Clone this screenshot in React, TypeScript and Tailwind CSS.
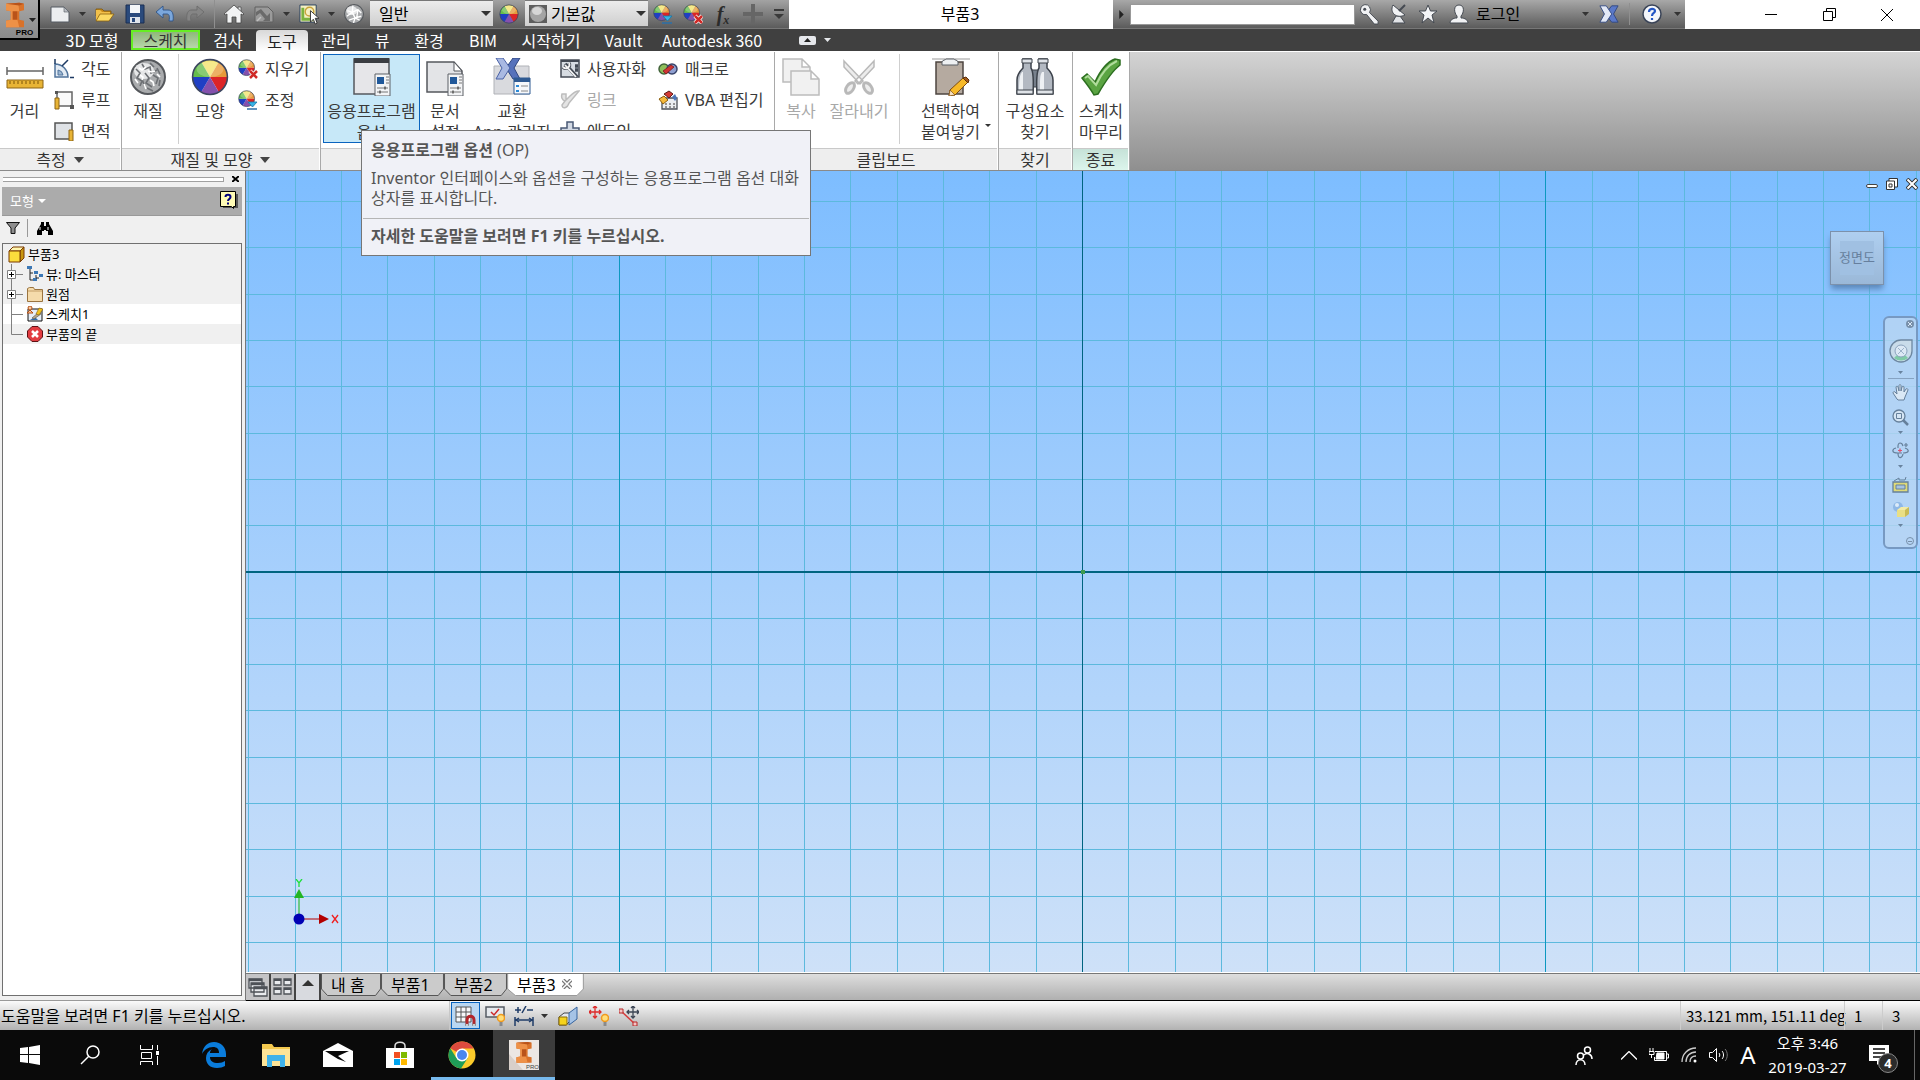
import type { ReactNode } from "react";
import clsx from "clsx";

const GRID_PITCH = 46.32;
const GRID_STEPS = Array.from({ length: 61 }, (_, i) => i - 30);

type IconProps = { className?: string };

/* ---------- shared icons ---------- */

function Caret({ className = "h-[5px] w-[9px] text-[#333]" }: IconProps) {
  return (
    <svg viewBox="0 0 10 5" preserveAspectRatio="none" className={clsx("shrink-0", className)}>
      <path d="M0 0h10L5 5z" fill="currentColor" />
    </svg>
  );
}

function WheelShape() {
  return (
    <>
      <path d="M12 12L6.500 2.500A11 11 0 0 1 17.500 2.500z" fill="#f2e36b" />
      <path d="M12 12L17.500 2.500A11 11 0 0 1 23 12z" fill="#e79a3a" />
      <path d="M12 12L23 12A11 11 0 0 1 17.500 21.500z" fill="#dc2427" />
      <path d="M12 12L17.500 21.500A11 11 0 0 1 6.500 21.500z" fill="#8450ad" />
      <path d="M12 12L6.500 21.500A11 11 0 0 1 1 12z" fill="#1f3fc4" />
      <path d="M12 12L1 12A11 11 0 0 1 6.500 2.500z" fill="#66bd4c" />
      <ellipse cx="12" cy="7" rx="8.500" ry="5" fill="#fff" opacity=".22" />
      <circle cx="12" cy="12" r="11" fill="none" stroke="#3c4660" strokeWidth="1" />
    </>
  );
}

function ColorWheel({ className = "size-5" }: IconProps) {
  return (
    <svg viewBox="0 0 24 24" className={className}>
      <WheelShape />
    </svg>
  );
}

function WheelClear({ className = "size-5" }: IconProps) {
  return (
    <svg viewBox="0 0 20 20" className={className}>
      <g transform="scale(.72)">
        <WheelShape />
      </g>
      <path d="M12 12l7 7M19 12l-7 7" stroke="#fff" strokeWidth="4" />
      <path d="M12 12l7 7M19 12l-7 7" stroke="#cf2a27" strokeWidth="2.500" />
    </svg>
  );
}

function WheelAdjust({ className = "size-5" }: IconProps) {
  return (
    <svg viewBox="0 0 20 20" className={className}>
      <g transform="scale(.72)">
        <WheelShape />
      </g>
      <path d="M10 12h9l-4.500 5z" fill="#36b3e6" stroke="#1576a8" strokeWidth=".8" />
      <path d="M9 19h10" stroke="#2b6fa8" strokeWidth="1.500" />
    </svg>
  );
}

function MarbleBall({ className = "size-5", net = false }: IconProps & { net?: boolean }) {
  return (
    <svg viewBox="0 0 36 36" className={className}>
      <circle cx="18" cy="18" r="17" fill="#a9abad" stroke="#55585c" strokeWidth="2" />
      <ellipse cx="14" cy="12" rx="10" ry="8" fill="#e6e7e8" />
      {net ? (
        <path
          d="M6 12l9 3 10-5 6 6M5 22l10-7 5 10 11-3M15 15l1-12M20 25l-3 9M25 10l-2 14M9 29l11-4 8 4"
          fill="none"
          stroke="#fff"
          strokeWidth="2.500"
        />
      ) : (
        <>
          <path
            d="M6 10l4 4-3 5 5 3-2 5M12 5l3 5 5-2 1 6 6-3M15 14l4 5-3 5 6 4M23 16l5 3-2 6M17 29l6 3M27 9l3 6M12 20l3 8M20 4l4 4M30 21l-1 6"
            fill="none"
            stroke="#6d7074"
            strokeWidth="1.600"
          />
          <path
            d="M9 9l3 2 4-3M10 16l3 2-1 3M18 12l4 1 3-1M20 21l3 2 1 4M14 25l2 5M27 15l3 3M5 20l3 4"
            fill="none"
            stroke="#fff"
            strokeWidth="1.600"
          />
        </>
      )}
    </svg>
  );
}

function InventorMark() {
  return (
    <>
      <path d="M3 1l14-1 5 1v7l-5 1v9l5 1v7H3v-7l5-1V9L3 8z" fill="#d9722a" />
      <path d="M3 1h13l1 8h-2v9l2 8H3v-7l5-1V9L3 8z" fill="#ee9147" />
      <path d="M10 9h5v9h-5zM3 1l14-1 5 1-5 2z" fill="#b9531a" />
    </>
  );
}

/* ---------- title bar ---------- */

const NewIcon = () => (
  <svg viewBox="0 0 20 18" className="h-[18px] w-5">
    <path d="M1 2h13l5 5v10H1z" fill="#eceef0" stroke="#555b63" />
    <path d="M14 2v5h5z" fill="#b9bdc2" stroke="#555b63" strokeWidth=".6" />
  </svg>
);

const OpenIcon = () => (
  <svg viewBox="0 0 20 16" className="h-4 w-5">
    <path d="M1 3h6l2 2h7v5H1z" fill="#c98c1c" stroke="#7a530b" strokeWidth=".8" />
    <path d="M1 14V4h4l2 2h8v3" fill="#f2c04a" />
    <path d="M1 15l4-7h14l-5 7z" fill="#fbd964" stroke="#8a5f0d" strokeWidth=".8" />
  </svg>
);

const SaveIcon = () => (
  <svg viewBox="0 0 20 20" className="size-5">
    <path d="M1 1h18v18H1z" fill="#2a4a7c" stroke="#1b2f52" />
    <path d="M5 1h10v8H5z" fill="#f4f6f8" />
    <path d="M5 13h10v6H5z" fill="#dfe4ea" />
    <path d="M7 14h3v4H7z" fill="#2a4a7c" />
  </svg>
);

const UndoIcon = ({ gray = false }: { gray?: boolean }) => (
  <svg viewBox="0 0 20 18" className={clsx("h-[18px] w-5", gray && "-scale-x-100")}>
    <path
      d="M1 7l7-6v4h5c4 0 6 3 5 11h-4c1-5 0-7-2-7H8v4z"
      fill={gray ? "#858585" : "#7ba7dc"}
      stroke={gray ? "#6c6c6c" : "#2f5486"}
      strokeWidth=".9"
    />
  </svg>
);

const HomeIcon = () => (
  <svg viewBox="0 0 20 20" className="size-5">
    <path d="M14 3h3v5h-3z" fill="#e7e9eb" stroke="#444" strokeWidth=".7" />
    <path d="M10 1L0 10l1 1 2-1v9h5v-6h4v6h5v-9l2 1 1-1z" fill="#f2f3f4" stroke="#444" strokeWidth=".8" />
  </svg>
);

const UpdateIcon = () => (
  <svg viewBox="0 0 20 18" className="h-[18px] w-5">
    <path d="M1 2h13l5 5v10H1z" fill="#9a9a9a" stroke="#606060" />
    <path d="M2 7l5-3 6 7 3-3v8H9l2-2-5-6-4 3z" fill="#6a6a6a" />
    <path d="M3 16l4-4" stroke="#c0c0c0" strokeWidth="1.500" />
  </svg>
);

const SelectIcon = () => (
  <svg viewBox="0 0 22 22" className="size-[21px]">
    <path d="M1 1h17v18H1z" fill="#f6f0c4" stroke="#27405f" />
    <path d="M4 4v12h11" fill="none" stroke="#7bb23f" strokeWidth="3" />
    <circle cx="11" cy="8" r="4.500" fill="none" stroke="#caa43c" strokeWidth="1.500" />
    <path d="M12 7v12l3-3 2 5 2-1-2-5h4z" fill="#fff" stroke="#333" />
  </svg>
);

const quickItems: { label: string; icon: ReactNode; menu?: boolean }[] = [
  { label: "새로 만들기", icon: <NewIcon />, menu: true },
  { label: "열기", icon: <OpenIcon /> },
  { label: "저장", icon: <SaveIcon /> },
  { label: "명령취소", icon: <UndoIcon /> },
  { label: "명령복구", icon: <UndoIcon gray /> },
];

const quickItems2: { label: string; icon: ReactNode; menu?: boolean }[] = [
  { label: "홈", icon: <HomeIcon /> },
  { label: "업데이트", icon: <UpdateIcon />, menu: true },
  { label: "선택", icon: <SelectIcon />, menu: true },
  { label: "재질", icon: <MarbleBall net /> },
];

function QuickButton({ label, icon, menu }: { label: string; icon: ReactNode; menu?: boolean }) {
  return (
    <>
      <button aria-label={label} className="flex w-[30px] items-center justify-center">
        {icon}
      </button>
      {menu && (
        <button aria-label={`${label} 메뉴`} className="flex w-[15px] items-center justify-center">
          <Caret className="h-1 w-[7px] text-[#333]" />
        </button>
      )}
    </>
  );
}

function Combo({ label, value, swatch }: { label: string; value: string; swatch?: boolean }) {
  return (
    <div className="mb-[2px] flex w-[123px] items-center border-t border-[#777] bg-linear-to-b from-[#ececec] to-[#cfcfcf]">
      {swatch && (
        <svg viewBox="0 0 18 18" className="ml-1 size-[18px]">
          <path d="M0 0h18v18H0z" fill="#5d5d5d" />
          <circle cx="9" cy="9" r="8" fill="#a4a4a4" />
          <ellipse cx="8" cy="6" rx="5" ry="4" fill="#d6d6d6" />
        </svg>
      )}
      <select
        aria-label={label}
        className={clsx("h-full flex-1 appearance-none bg-transparent text-base leading-5 text-black", swatch ? "pl-1" : "pl-[9px]")}
      >
        <option>{value}</option>
      </select>
      <Caret className="mr-[2px] h-[5px] w-[10px] text-[#333]" />
    </div>
  );
}

const KeyIcon = () => (
  <svg viewBox="0 0 22 22" className="size-[21px]">
    <path d="M2 4a5 5 0 0 1 9-1 5 5 0 0 1 0 6l9 9v3h-4l-8-10a5 5 0 0 1-6-7z" fill="#f1f2f4" stroke="#454a52" />
    <circle cx="6" cy="5.500" r="1.600" fill="#454a52" />
  </svg>
);

const DishIcon = () => (
  <svg viewBox="0 0 20 20" className="size-5">
    <path d="M7 12l-4 7h13l-5-7z" fill="#e2e4e7" stroke="#454a52" />
    <path d="M4 1c-4 8 4 14 12 10z" fill="#f1f2f4" stroke="#454a52" />
    <path d="M10 7l6-6" stroke="#454a52" strokeWidth="2" />
  </svg>
);

const StarIcon = () => (
  <svg viewBox="0 0 20 20" className="size-5">
    <path d="M10 1l2.500 6H19l-5 4 2 8-6-5-6 5 2-8-5-4h6.500z" fill="#f4f5f7" stroke="#454a52" />
  </svg>
);

const UserIcon = () => (
  <svg viewBox="0 0 20 20" className="size-5">
    <path d="M10 1c6 0 5 8 2 11v2c4 0 7 2 7 5H1c0-3 3-5 7-5v-2C5 9 4 1 10 1z" fill="#f1f2f4" stroke="#454a52" />
  </svg>
);

const ExchangeIcon = ({ className = "size-5" }: IconProps) => (
  <svg viewBox="0 0 22 20" className={className} strokeLinejoin="round">
    <path d="M21 1h-7l-7 9 7 9h7l-5-9z" fill="#5a78c8" stroke="#31477f" />
    <path d="M1 1h7l6 9-6 9H1l5-9z" fill="#e3e9f6" stroke="#31477f" />
  </svg>
);

function TitleBar() {
  return (
    <div className="flex h-[29px] bg-white">
      <div className="flex border-b border-[#777] bg-linear-to-b from-[#a3a3a3] to-[#5c5c5c] pl-[45px]">
        {quickItems.map((q) => (
          <QuickButton key={q.label} {...q} />
        ))}
        <span className="mx-1 w-px bg-[#8f8f8f]" />
        {quickItems2.map((q) => (
          <QuickButton key={q.label} {...q} />
        ))}
        <span className="w-px" />
        <Combo label="재질 종류" value="일반" />
        <button aria-label="모양" className="flex w-8 items-center justify-center">
          <ColorWheel />
        </button>
        <Combo label="모양 종류" value="기본값" swatch />
        <QuickButton label="조정" icon={<WheelAdjust />} />
        <QuickButton label="지우기" icon={<WheelClear />} />
        <button aria-label="매개변수" className="w-[30px] font-['Liberation_Serif',serif] text-xl leading-5 font-bold text-[#2b2b2b] italic">
          f<sub className="text-xs">x</sub>
        </button>
        <QuickButton
          label="추가"
          icon={
            <svg viewBox="0 0 20 20" className="size-5">
              <path d="M8 0h4v8h8v4h-8v8H8v-8H0V8h8z" fill="#666" />
            </svg>
          }
        />
        <button aria-label="사용자화 메뉴" className="flex w-[21px] flex-col items-center justify-center gap-[3px]">
          <span className="h-[2px] w-[10px] bg-[#3a3a3a]" />
          <Caret className="h-[5px] w-[10px] text-[#3a3a3a]" />
        </button>
      </div>

      <h1 className="flex-1 pl-[18px] text-center text-base leading-[29px] text-black">부품3</h1>

      <div className="flex w-[572px] items-center border-b border-[#777] bg-linear-to-b from-[#a8a8a8] to-[#5c5c5c]">
        <span className="flex w-[17px] justify-center">
          <svg viewBox="0 0 5 10" className="h-[9px] w-[5px]">
            <path d="M0 0v10l5-5z" fill="#222" />
          </svg>
        </span>
        <input aria-label="검색" className="h-[21px] w-[225px] border border-[#999] bg-white px-1 text-sm" />
        <button aria-label="키" className="flex w-[29px] justify-center"><KeyIcon /></button>
        <button aria-label="통신 센터" className="flex w-[29px] justify-center"><DishIcon /></button>
        <button aria-label="즐겨찾기" className="flex w-[30px] justify-center"><StarIcon /></button>
        <button className="flex w-[150px] items-center gap-[7px] pl-[6px] text-base leading-5 text-black">
          <UserIcon />
          <span className="flex-1 text-left">로그인</span>
          <Caret className="mr-1 h-1 w-[7px] text-[#333]" />
        </button>
        <button aria-label="Exchange" className="flex w-8 justify-center"><ExchangeIcon /></button>
        <span className="mx-1 h-[22px] w-px bg-[#8f8f8f]" />
        <button aria-label="도움말" className="flex w-9 justify-center">
          <svg viewBox="0 0 20 20" className="size-5">
            <circle cx="10" cy="10" r="9" fill="#f4f6fa" stroke="#3a4458" strokeWidth="1.500" />
            <path d="M7 8c0-4 6-4 6-1 0 2-3 2-3 5M10 14v2" fill="none" stroke="#2456c5" strokeWidth="2.200" />
          </svg>
        </button>
        <Caret className="ml-1 h-1 w-[7px] text-[#333]" />
      </div>

      <div className="flex w-[235px] pl-[57px]">
        <button aria-label="최소화" className="flex w-[58px] items-center justify-center">
          <span className="h-px w-3 bg-black" />
        </button>
        <button aria-label="복원" className="flex w-[58px] items-center justify-center">
          <svg viewBox="0 0 13 13" className="size-[13px]" fill="none" stroke="#000">
            <path d="M.5 3.500h9v9h-9zM3.500 3.500v-3h9v9h-3" />
          </svg>
        </button>
        <button aria-label="닫기" className="flex w-[58px] items-center justify-center">
          <svg viewBox="0 0 12 12" className="size-3" fill="none" stroke="#000">
            <path d="M0 0l12 12M12 0L0 12" />
          </svg>
        </button>
      </div>
    </div>
  );
}

/* ---------- ribbon tabs ---------- */

const ribbonTabs = [
  { label: "3D 모형", width: "w-[78px]" },
  { label: "스케치", width: "w-[69px]", sketch: true },
  { label: "검사", width: "w-[56px]" },
  { label: "도구", width: "w-[52px]", active: true },
  { label: "관리", width: "w-[56px]" },
  { label: "뷰", width: "w-[36px]" },
  { label: "환경", width: "w-[58px]" },
  { label: "BIM", width: "w-[50px]" },
  { label: "시작하기", width: "w-[86px]" },
  { label: "Vault", width: "w-[59px]" },
  { label: "Autodesk 360", width: "w-[118px]" },
];

function RibbonTabs() {
  return (
    <nav className="flex h-[22px] items-stretch bg-[#404040] pl-[53px] font-['Noto_Sans_CJK_KR',sans-serif] text-base leading-[22px] whitespace-nowrap text-white">
      {ribbonTabs.map((t) => (
        <button
          key={t.label}
          className={clsx(
            t.width,
            t.sketch && "my-px border-2 border-[#66ee22] bg-linear-to-b from-[#8fb87a] to-[#b8d6ab] leading-4 text-[#333]",
            t.active && "mt-px rounded-t-sm bg-linear-to-b from-[#d8d8d8] to-white text-[#222]"
          )}
        >
          {t.label}
        </button>
      ))}
      <button aria-label="리본 최소화" className="ml-7 flex items-center gap-2">
        <span className="flex h-[9px] w-[17px] items-center justify-center rounded-xs bg-[#e6e8ec]">
          <Caret className="h-1 w-[7px] rotate-180 text-[#222]" />
        </span>
        <Caret className="h-1 w-[7px] text-[#e6e8ec]" />
      </button>
    </nav>
  );
}

/* ---------- ribbon icons ---------- */

const DistanceIcon = () => (
  <svg viewBox="0 0 38 38" className="size-[38px]">
    <path d="M1 9v8M37 9v8M1 13h36" stroke="#666" strokeWidth="1.500" />
    <path d="M1 22h36v8H1z" fill="#e8b436" stroke="#8d6414" />
    <path d="M4 23v3M8 23v3M12 23v3M16 23v3M20 23v3M24 23v3M28 23v3M32 23v3" stroke="#7b5409" />
  </svg>
);

const AngleIcon = () => (
  <svg viewBox="0 0 20 20" className="size-5">
    <path d="M1 5a13 13 0 0 1 13 13H1z" fill="#e3ebf4" stroke="#51749c" strokeWidth="1.500" />
    <path d="M4 11a6 6 0 0 1 5 5H4z" fill="#9db7d2" stroke="#51749c" />
    <path d="M1 0v5M8 7l6-6M16 18.500h4" stroke="#1d3a63" strokeWidth="1.500" />
  </svg>
);

const LoopIcon = () => (
  <svg viewBox="0 0 20 20" className="size-5">
    <path d="M3 2h15v14H3z" fill="#fafafa" stroke="#666" strokeWidth="1.500" />
    <path d="M1 8h4v11H1z" fill="#e8b436" stroke="#8d6414" />
    <path d="M16 15h4v4h-4zM1 1h3v3H1z" fill="#555" />
  </svg>
);

const AreaIcon = () => (
  <svg viewBox="0 0 20 20" className="size-5">
    <path d="M1 2h17v16H1z" fill="#dfe2e6" stroke="#555" strokeWidth="1.500" />
    <path d="M15 9h4v11h-4z" fill="#e8b436" stroke="#8d6414" />
  </svg>
);

const PageBadge = () => (
  <>
    <path d="M22 16h15v22H22z" fill="#f3f4f6" stroke="#5d6167" />
    <path d="M24 19h7v7h-7z" fill="#20589a" />
    <path d="M33 19h3M33 22h3M33 25h3M24 30h11M24 34h11" stroke="#777" />
    <path d="M32 28.500v3M27 32.500v3" stroke="#555" strokeWidth="1.500" />
  </>
);

const AppOptionsIcon = () => (
  <svg viewBox="0 0 38 38" className="size-[38px]">
    <path d="M1 1h35v35H1z" fill="#e6e6e9" stroke="#55585e" strokeWidth="1.500" />
    <path d="M1 0h35v5H1z" fill="#3b3d42" />
    <PageBadge />
  </svg>
);

const DocOptionsIcon = () => (
  <svg viewBox="0 0 38 38" className="size-[38px]">
    <path d="M1 4h27l8 9v21H1z" fill="#e3e4e7" stroke="#55585e" strokeWidth="1.500" />
    <path d="M28 4v9h8z" fill="#fff" stroke="#55585e" />
    <PageBadge />
  </svg>
);

const ExchangeAppIcon = () => (
  <svg viewBox="0 0 38 38" className="size-[38px]">
    <path d="M1 8h35v28H1z" fill="#d9dade" stroke="#b0b2b7" />
    <path d="M27 0h-7l-7 10 7 11h7l-6-11z" fill="#5672bb" stroke="#31477f" />
    <path d="M3 0h7l7 10-7 11H3l6-11z" fill="#a9b9e2" stroke="#4a62a6" />
    <path d="M21 20h16v16H21z" fill="#f6f8fb" stroke="#2f5a92" />
    <path d="M21 20h16v4H21z" fill="#2f5a92" />
    <path d="M23 27h3v2h-3zM23 32h3v2h-3z" fill="#2a8ad8" />
    <path d="M28 28h7M28 33h7" stroke="#888" />
  </svg>
);

const CustomizeIcon = () => (
  <svg viewBox="0 0 20 20" className="size-5">
    <path d="M1 1h18v17H1z" fill="#d7dce2" stroke="#444a54" strokeWidth="1.500" />
    <path d="M1 1h18v2H1z" fill="#444a54" />
    <path d="M5 5l12 13M9 4c2 4-3 7-6 4M15 7h3M15 11h3" stroke="#444a54" strokeWidth="3.500" fill="none" />
    <path d="M5 6l11 12M9 4c2 4-3 7-6 4" stroke="#f5f5f5" strokeWidth="1.800" fill="none" />
  </svg>
);

const LinkIcon = () => (
  <svg viewBox="0 0 20 20" className="size-5">
    <path
      d="M2 4h4v6l4-4c2-2 6-5 9-5L9 13c-2 6-7 6-7 2l3-4c-3-1-4-4-3-7z"
      fill="#e4e4e4"
      stroke="#bdbdbd"
      strokeWidth="1.500"
    />
  </svg>
);

const AddinIcon = () => (
  <svg viewBox="0 0 20 20" className="size-5">
    <path d="M7 1h6v6h6v6h-6v6H7v-6H1V7h6z" fill="#d2d9e4" stroke="#4a5a75" strokeWidth="1.500" />
  </svg>
);

const MacroIcon = () => (
  <svg viewBox="0 0 20 14" className="h-[14px] w-5">
    <circle cx="6" cy="7" r="5" fill="#8ebd5a" stroke="#41633a" strokeWidth="1.500" />
    <circle cx="14" cy="7" r="5" fill="#8f9fd0" stroke="#38446b" strokeWidth="1.500" />
    <path d="M5 9l8-6 3 2-8 7z" fill="#cf3434" stroke="#7c1d1d" strokeWidth=".8" />
  </svg>
);

const VbaIcon = () => (
  <svg viewBox="0 0 20 20" className="size-5">
    <path d="M4 8h15v11H4z" fill="#eceef1" stroke="#4c5058" strokeWidth="1.300" />
    <path d="M7 14h2M11 14h2M15 14h2M7 17h2M11 17h2M15 17h2" stroke="#777" strokeWidth="1.500" />
    <path d="M6 4l5-3 4 3-4 4z" fill="#d33a34" stroke="#5c1a17" />
    <path d="M1 9l5-3 4 4-5 4z" fill="#f5b93a" stroke="#8a5d10" />
    <path d="M14 7l3-3 2 4-2 3z" fill="#4d75b8" />
  </svg>
);

const CopyIcon = () => (
  <svg viewBox="0 0 38 38" className="size-[38px]" fill="#f1f1f1" stroke="#bcbcbc" strokeWidth="1.500">
    <path d="M1 1h19l8 8v15H1zM20 1v8h8" />
    <path d="M9 13h20l8 8v16H9zM29 13v8h8" />
  </svg>
);

const CutIcon = () => (
  <svg viewBox="0 0 38 38" className="size-[38px]" fill="#ededed" stroke="#b9b9b9" strokeWidth="1.500">
    <path d="M4 3l19 20-3 3L4 9zM34 3L15 23l3 3L34 9z" />
    <ellipse cx="10" cy="30" rx="3.500" ry="6" transform="rotate(35 10 30)" strokeWidth="3" />
    <ellipse cx="28" cy="30" rx="3.500" ry="6" transform="rotate(-35 28 30)" strokeWidth="3" />
  </svg>
);

const PasteIcon = () => (
  <svg viewBox="0 0 38 38" className="size-[38px]">
    <path d="M0 1h38" stroke="#999" />
    <path d="M4 4h27v32H4z" fill="#b5aaa0" stroke="#4d4640" strokeWidth="1.500" />
    <path d="M10 4c0-2 4-2 4-3h8c0 1 4 1 4 3v3H10z" fill="#eef0f2" stroke="#5a5e64" />
    <path d="M18 32l13-12 5 4-13 13-6 1z" fill="#f7b928" stroke="#7e4d12" />
    <path d="M31 20l3-1 3 3-1 3z" fill="#a35b1e" stroke="#5c2f0a" />
    <path d="M18 32l-1 6 6-1z" fill="#f6e0c0" stroke="#7e4d12" strokeWidth=".7" />
  </svg>
);

const BinocularsIcon = () => (
  <svg viewBox="0 0 38 38" className="size-[38px]">
    <path d="M14 12h10v17H14z" fill="#78818d" stroke="#3c424b" />
    <path d="M7 1h8v9c2 3 3 8 2 26H1V22c0-5 3-9 6-12z" fill="#b3b9c2" stroke="#3c424b" strokeWidth="1.500" />
    <path d="M31 1h-8v9c-2 3-3 8-2 26h16V22c0-5-3-9-6-12z" fill="#b3b9c2" stroke="#3c424b" strokeWidth="1.500" />
    <path d="M6 14c-2 3-3 6-3 18h4V14zM26 14c-2 3-2 6-2 18h4V14z" fill="#eef1f4" />
    <path d="M6 1h10v4H6zM22 1h10v4H22zM1 32h16v4H1zM21 32h16v4H21z" fill="#dfe3e8" stroke="#3c424b" />
  </svg>
);

const CheckIcon = () => (
  <svg viewBox="0 0 40 38" className="h-[38px] w-10">
    <path d="M1 20l5-4 8 8C19 13 26 4 34 1l5 1v5C31 13 24 24 17 36l-4 1C9 30 5 25 1 20z" fill="#5aa442" stroke="#2c6e20" strokeWidth="1.500" />
    <path d="M4 20l3-2 8 9C20 16 27 7 36 3" fill="none" stroke="#b0dc9c" strokeWidth="2" />
  </svg>
);

/* ---------- ribbon ---------- */

type BigProps = { icon: ReactNode; label: string; sub?: string; className?: string; active?: boolean; disabled?: boolean };

function BigButton({ icon, label, sub, className, active, disabled }: BigProps) {
  return (
    <button
      disabled={disabled}
      className={clsx(
        "flex h-[89px] shrink-0 flex-col items-center border text-base leading-[21px] whitespace-nowrap",
        active ? "border-[#0a64bf] bg-[#c7e8f8]" : "border-transparent",
        disabled ? "text-[#a8a8a8]" : "text-[#3a3a3a]",
        className
      )}
    >
      <span className="mt-[3px] mb-[5px] flex h-[38px] items-center">{icon}</span>
      <span>{label}</span>
      {sub && <span>{sub}</span>}
    </button>
  );
}

function SmallButton({ icon, label, disabled }: { icon: ReactNode; label: string; disabled?: boolean }) {
  return (
    <button
      disabled={disabled}
      className={clsx(
        "flex h-[31px] items-center gap-[7px] pb-[2px] text-base leading-5 whitespace-nowrap",
        disabled ? "text-[#a8a8a8]" : "text-[#3a3a3a]"
      )}
    >
      <span className="flex w-5 justify-center">{icon}</span>
      {label}
    </button>
  );
}

type PanelProps = { title: string; menu?: boolean; className?: string; footer?: string; children: ReactNode };

function Panel({ title, menu, className, footer, children }: PanelProps) {
  return (
    <section className={clsx("flex shrink-0 flex-col border-r border-[#a9a9a9] bg-white", className)}>
      <div className="flex h-[96px] items-start pt-[2px]">{children}</div>
      <h2
        className={clsx(
          "mr-px flex flex-1 items-center justify-center gap-2 border-t border-[#c9c9c9] text-base leading-5 font-normal text-[#333]",
          footer ?? "bg-[#eeeeee]"
        )}
      >
        {title}
        {menu && <Caret className="h-[6px] w-[10px] text-[#444]" />}
      </h2>
    </section>
  );
}

function Ribbon() {
  return (
    <div className="flex h-[120px] border-t border-b border-t-white border-b-[#8a8a8a] bg-linear-to-b from-[#d4d4d4] to-[#8f8f8f]">
      <Panel title="측정" menu className="w-[122px]">
        <BigButton icon={<DistanceIcon />} label="거리" className="w-[49px]" />
        <div className="flex flex-col pl-[5px]">
          <SmallButton icon={<AngleIcon />} label="각도" />
          <SmallButton icon={<LoopIcon />} label="루프" />
          <SmallButton icon={<AreaIcon />} label="면적" />
        </div>
      </Panel>

      <Panel title="재질 및 모양" menu className="w-[199px]">
        <BigButton icon={<MarbleBall className="size-[36px]" />} label="재질" className="w-[52px]" />
        <span className="mx-1 h-[90px] w-px bg-[#cfcfcf]" />
        <BigButton icon={<ColorWheel className="size-[38px]" />} label="모양" className="w-[54px]" />
        <div className="flex flex-col pl-px">
          <SmallButton icon={<WheelClear />} label="지우기" />
          <SmallButton icon={<WheelAdjust />} label="조정" />
        </div>
      </Panel>

      <Panel title="옵션" menu className="w-[454px]">
        <BigButton icon={<AppOptionsIcon />} label="응용프로그램" sub="옵션" active className="ml-[2px] w-[97px]" />
        <BigButton icon={<DocOptionsIcon />} label="문서" sub="설정" className="w-[50px]" />
        <BigButton icon={<ExchangeAppIcon />} label="교환" sub="App 관리자" className="w-[84px]" />
        <div className="flex flex-col pl-[6px]">
          <SmallButton icon={<CustomizeIcon />} label="사용자화" />
          <SmallButton icon={<LinkIcon />} label="링크" disabled />
          <SmallButton icon={<AddinIcon />} label="애드인" />
        </div>
        <div className="flex flex-col pl-3">
          <SmallButton icon={<MacroIcon />} label="매크로" />
          <SmallButton icon={<VbaIcon />} label="VBA 편집기" />
        </div>
      </Panel>

      <Panel title="클립보드" className="w-[224px]">
        <BigButton icon={<CopyIcon />} label="복사" disabled className="w-[52px]" />
        <BigButton icon={<CutIcon />} label="잘라내기" disabled className="w-[64px]" />
        <span className="mr-3 ml-2 h-[90px] w-px bg-[#cfcfcf]" />
        <BigButton icon={<PasteIcon />} label="선택하여" sub="붙여넣기" className="w-[77px]" />
        <Caret className="-ml-1 mt-[70px] h-[3px] w-[6px] text-[#333]" />
      </Panel>

      <Panel title="찾기" className="w-[74px]">
        <BigButton icon={<BinocularsIcon />} label="구성요소" sub="찾기" className="w-[72px]" />
      </Panel>

      <Panel title="종료" className="w-[57px]" footer="bg-linear-to-b from-[#c6e2d8] to-[#dcf5ec]">
        <BigButton icon={<CheckIcon />} label="스케치" sub="마무리" className="w-[56px]" />
      </Panel>
    </div>
  );
}

function OptionsTooltip() {
  return (
    <div
      role="tooltip"
      className="absolute top-[130px] left-[361px] z-20 w-[450px] border border-[#767676] bg-[#f0f1f7] text-base leading-5 whitespace-nowrap text-[#555]"
    >
      <p className="px-[9px] pt-[9px]">
        <b>응용프로그램 옵션</b> (OP)
      </p>
      <p className="px-[9px] pt-2 pb-[10px]">
        Inventor 인터페이스와 옵션을 구성하는 응용프로그램 옵션 대화
        <br />
        상자를 표시합니다.
      </p>
      <p className="mx-px border-t border-[#b5b5b5] px-2 pt-[7px] pb-[9px] font-bold">자세한 도움말을 보려면 F1 키를 누르십시오.</p>
    </div>
  );
}

/* ---------- model browser ---------- */

const PartIcon = () => (
  <svg viewBox="0 0 17 17" className="size-[17px]" stroke="#7a3b00" strokeLinejoin="round">
    <path d="M1 5l4-4h11l-4 4z" fill="#fff6b0" />
    <path d="M12 5l4-4v11l-4 4z" fill="#c8960f" />
    <path d="M1 5h11v11H1z" fill="#fbdc3c" />
  </svg>
);

const ViewRepIcon = () => (
  <svg viewBox="0 0 16 16" className="size-4">
    <path d="M3 2v12h3M3 7h3" fill="none" stroke="#222" />
    <path d="M0 0h5v3H0zM7 5h4v3H7zM12 8h4v3h-4zM6 12h4v3H6z" fill="#3c78b5" />
    <path d="M9 9v3h3" fill="none" stroke="#222" />
  </svg>
);

const FolderIcon = () => (
  <svg viewBox="0 0 16 15" className="h-[15px] w-4">
    <path d="M.5 14.500v-13l2-1h4l1 2h8v12z" fill="#f5dbab" stroke="#9a7440" />
    <path d="M1 4h14" stroke="#c39d66" />
  </svg>
);

const SketchIcon = () => (
  <svg viewBox="0 0 16 16" className="size-4">
    <path d="M1 3h14v12H1z" fill="#e5edf7" stroke="#111" />
    <path d="M3 14h8l-3-3z" fill="#2f6cb0" />
    <path d="M5 12l7-6 2 2-7 5z" fill="#b9a58a" stroke="#554" strokeWidth=".6" />
    <path d="M9 8l3-6 4 1-4 6z" fill="#f2c21e" stroke="#80570a" strokeWidth=".6" />
    <circle cx="3" cy="2" r="2" fill="#f7c9a0" stroke="#b34d12" />
    <path d="M0 7l3-3 3 3z" fill="#f7c9a0" stroke="#b34d12" />
  </svg>
);

const EndIcon = () => (
  <svg viewBox="0 0 16 16" className="size-4">
    <path d="M5 .5h6L15.500 5v6L11 15.500H5L.5 11V5z" fill="#e23b40" stroke="#5d1214" />
    <path d="M5 5l6 6M11 5l-6 6" stroke="#fff" strokeWidth="2.500" />
  </svg>
);

const treeItems = [
  { label: "뷰: 마스터", icon: <ViewRepIcon />, expandable: true },
  { label: "원점", icon: <FolderIcon />, expandable: true },
  { label: "스케치1", icon: <SketchIcon />, white: true },
  { label: "부품의 끝", icon: <EndIcon />, last: true },
];

function TreeBranch({ expandable, last }: { expandable?: boolean; last?: boolean }) {
  return (
    <svg viewBox="0 0 20 20" className="h-5 w-5 shrink-0" fill="none" stroke="#808080">
      <path d={last ? "M8.500 0v10.500H20" : "M8.500 0v20M8.500 10.500H20"} />
      {expandable && (
        <>
          <path d="M4.500 6.500h8v8h-8z" fill="#fff" />
          <path d="M6 10.500h5M8.500 8v5" stroke="#000" />
        </>
      )}
    </svg>
  );
}

function ModelBrowser() {
  return (
    <aside className="flex w-[245px] shrink-0 flex-col border-b border-[#999] bg-[#f0f0f0] pr-[3px] pb-[4px] pl-[2px]">
      <div className="flex h-4 items-center gap-1 pl-px">
        <span className="h-[5px] flex-1 border-y border-r border-[#a0a0a0] bg-white" />
        <button aria-label="패널 닫기" className="flex w-[14px] justify-center">
          <svg viewBox="0 0 7 6" className="h-[6px] w-[7px]">
            <path d="M0 0l7 6M7 0L0 6" stroke="#000" strokeWidth="2" />
          </svg>
        </button>
      </div>
      <div className="flex h-[29px] items-center justify-between border-b border-[#999] bg-[#ababab] pr-1 pb-px pl-2">
        <button className="flex items-center gap-1 text-[13px] leading-5 text-white">
          모형
          <Caret className="h-1 w-2 text-white" />
        </button>
        <button aria-label="도움말">
          <svg viewBox="0 0 18 19" className="h-[19px] w-[18px]">
            <path d="M3 3h15v14H3z" fill="#555" />
            <path d="M.5 .5h15v15h-2v2l-2-2H.5z" fill="#fffbb5" stroke="#000" />
            <path d="M5.500 6c0-3 5-3 5 0 0 2-2.500 2-2.500 4M8 11.500v2" fill="none" stroke="#00007b" strokeWidth="2" />
          </svg>
        </button>
      </div>
      <div className="flex h-[27px] items-center pb-[3px] pl-1">
        <button aria-label="필터">
          <svg viewBox="0 0 14 12" className="h-3 w-[14px]">
            <path d="M.5 .5h13L9 6v5.500H5V6z" fill="#8d8d8d" stroke="#111" />
          </svg>
        </button>
        <span className="mx-[7px] h-[18px] w-px bg-[#999]" />
        <button aria-label="찾기">
          <svg viewBox="0 0 16 13" className="ml-[2px] h-[13px] w-4">
            <path d="M4 0h3v4h2V0h3v2l4 7v4h-5V9H9V8H7v1H5v4H0V9l4-7z" fill="#000" />
            <path d="M3 5v3M11 5v3" stroke="#fff" />
          </svg>
        </button>
      </div>
      <div className="flex-1 border border-[#707070] bg-white text-[13px] leading-5 text-black">
        <div className="flex h-5 items-center gap-[3px] bg-[#f0f0f0] pl-[5px]">
          <PartIcon />
          <span className="pb-px">부품3</span>
        </div>
        <ul>
          {treeItems.map((t) => (
            <li key={t.label} className={clsx("flex h-5 items-center", t.white ? "bg-white" : "bg-[#f0f0f0]")}>
              <TreeBranch expandable={t.expandable} last={t.last} />
              <span className="mr-[3px] ml-1">{t.icon}</span>
              <span className="pb-px">{t.label}</span>
            </li>
          ))}
        </ul>
      </div>
    </aside>
  );
}

/* ---------- sketch canvas ---------- */

function SketchGrid() {
  return (
    <svg className="block h-full w-full" shapeRendering="crispEdges">
      <svg x="50%" y="50%" overflow="visible">
        {GRID_STEPS.map((i) => (
          <g key={i} fill="#5cb9dd">
            <rect x="-2000" y={Math.floor(i * GRID_PITCH)} width="4000" height="1" />
            <rect x={Math.round(i * GRID_PITCH) - 1} y="-2000" width="1" height="4000" />
          </g>
        ))}
        {[-20, -10, 10, 20].map((i) => (
          <rect key={i} x={Math.round(i * GRID_PITCH) - 1} y="-2000" width="1" height="4000" fill="#0d98c0" />
        ))}
        <rect x="-2000" y="-1" width="4000" height="2" fill="#006480" />
        <rect x="-1" y="-2000" width="1" height="4000" fill="#006480" />
        <rect x="-2" y="-2" width="4" height="4" fill="#3f9a4f" />
      </svg>
    </svg>
  );
}

function AxisTriad() {
  return (
    <svg viewBox="0 0 56 52" className="absolute bottom-[41px] left-[44px] h-[52px] w-14">
      <path d="M9 40V16" stroke="#12b312" />
      <path d="M9 10l5 9H4z" fill="#23b523" />
      <path d="M9 40h22" stroke="#b30000" />
      <path d="M29 35l10 5-10 5z" fill="#b30000" />
      <circle cx="9" cy="40" r="5.500" fill="#0000b4" />
      <path d="M6 0l3 4 3-4M9 4v4" fill="none" stroke="#1fe03a" strokeWidth="1.300" />
      <path d="M42 36l6 8M48 36l-6 8" stroke="#f02020" strokeWidth="1.300" />
    </svg>
  );
}

const NavCaret = () => <Caret className="h-[3px] w-[5px] text-[#68839f]" />;

function NavigationBar() {
  return (
    <div className="absolute top-[145px] right-[2px] flex h-[233px] w-[35px] flex-col items-center rounded-md border-2 border-[#7799c2] bg-[#b9d6f3]/80">
      <button aria-label="탐색 막대 닫기" className="mt-[2px] mr-[2px] flex size-2 items-center justify-center self-end rounded-full bg-[#7890aa]">
        <svg viewBox="0 0 6 6" className="size-1">
          <path d="M0 0l6 6M6 0L0 6" stroke="#dbe9f8" strokeWidth="1.500" />
        </svg>
      </button>
      <button aria-label="전체 탐색 휠" className="mt-[11px]">
        <svg viewBox="0 0 24 24" className="size-6">
          <path d="M12 1h11v11A11 11 0 1 1 12 1z" fill="#c9dcea" stroke="#6d87a0" strokeWidth="1.300" />
          <path d="M5 19a11 11 0 0 0 14 0l-3-3H8z" fill="#7fcba6" />
          <circle cx="12" cy="12" r="6" fill="#dce9f5" stroke="#8ba3bd" />
          <path d="M9 9l6 6M15 9l-6 6" stroke="#8ba3bd" strokeWidth=".8" />
        </svg>
      </button>
      <span className="mt-2"><NavCaret /></span>
      <span className="mt-1 h-px w-[26px] bg-[#86a3c2]" />
      <button aria-label="초점이동" className="mt-[5px]">
        <svg viewBox="0 0 17 17" className="size-[17px]">
          <path
            d="M5 15L1 9c0-1 1-2 2-1l2 2-1-7c0-1 2-1 2 0l1 4V2c0-2 2-2 2 0v5l1-4c0-1 2-1 2 0v5l2-3c1-1 2 0 2 1l-3 7-1 3H6z"
            fill="#dae8f5"
            stroke="#66809b"
          />
        </svg>
      </button>
      <button aria-label="줌" className="mt-2">
        <svg viewBox="0 0 17 17" className="size-[17px]">
          <circle cx="7" cy="7" r="6" fill="#d5e5f4" stroke="#66809b" strokeWidth="1.300" />
          <path d="M4.500 4.500h5v5h-5z" fill="none" stroke="#66809b" />
          <path d="M11 11l5 5" stroke="#66809b" strokeWidth="2.500" />
        </svg>
      </button>
      <span className="mt-[5px]"><NavCaret /></span>
      <button aria-label="회전" className="mt-2">
        <svg viewBox="0 0 17 17" className="size-[17px]" fill="none" stroke="#66809b" strokeWidth="1.200">
          <path d="M6 6V4c0-4 4-4 5 0M6 11c0 6 4 6 5 1M4 6c-4 1-5 5 2 5h4M13 6c5 2 4 5-2 5" />
          <path d="M6 8.500h4M8 6.500v4" stroke="#e0506a" />
          <path d="M12 3h4M14 1v4" />
        </svg>
      </button>
      <span className="mt-[6px]"><NavCaret /></span>
      <button aria-label="면 보기" className="mt-2">
        <svg viewBox="0 0 17 17" className="size-[17px]">
          <path d="M1 6h15v10H1z" fill="#dfd978" stroke="#66809b" strokeWidth="1.300" />
          <path d="M4 9h9v4H4z" fill="#a8c4e0" stroke="#66809b" />
          <path d="M2 5l5-3v2h6l1-3" fill="none" stroke="#66809b" />
        </svg>
      </button>
      <button aria-label="비주얼 스타일" className="mt-2">
        <svg viewBox="0 0 17 17" className="size-[17px]">
          <circle cx="6" cy="6" r="5" fill="#8fb8e6" />
          <circle cx="5" cy="4" r="2" fill="#dcebfa" />
          <path d="M5 9l4-3h8l-4 3z" fill="#f3eba6" />
          <path d="M5 9h8v7H5z" fill="#e9df85" />
          <path d="M13 9l4-3v7l-4 3z" fill="#c9bb55" />
        </svg>
      </button>
      <span className="mt-[6px]"><NavCaret /></span>
      <button aria-label="탐색 막대 옵션" className="mt-auto mr-[2px] mb-[2px] flex size-2 items-center justify-center self-end rounded-full border border-[#7890aa]">
        <span className="h-px w-1 bg-[#7890aa]" />
      </button>
    </div>
  );
}

function SketchCanvas() {
  return (
    <main className="relative min-h-0 flex-1 overflow-hidden bg-linear-to-b from-[#7dbdff] to-[#cee1f8]">
      <SketchGrid />
      <div className="absolute top-[7px] right-[2px] flex items-center gap-2">
        <button aria-label="문서 최소화" className="mt-1 h-1 w-3 rounded-xs border border-[#444] bg-white" />
        <button aria-label="문서 복원">
          <svg viewBox="0 0 12 12" className="size-3" fill="#fff" stroke="#333">
            <path d="M3 .5h8.500V9H3z" />
            <path d="M.5 3h8v8.500h-8z" />
            <path d="M3 6h3v3H3z" />
          </svg>
        </button>
        <button aria-label="문서 닫기">
          <svg viewBox="0 0 12 12" className="size-3">
            <path d="M1 1l10 10M11 1L1 11" stroke="#333" strokeWidth="4" />
            <path d="M1.500 1.500l9 9M10.500 1.500l-9 9" stroke="#fff" strokeWidth="2" />
          </svg>
        </button>
      </div>
      <button className="absolute top-[60px] right-9 flex size-[54px] items-center justify-center border border-[#7c91ab] bg-linear-to-b from-[#afcff0] to-[#9ab8d8] text-[13px] text-[#667f9d] shadow-[0_5px_6px_-1px_#5b86b8]">
        <span className="flex size-[34px] items-center justify-center bg-[#a0c0e2] whitespace-nowrap">정면도</span>
      </button>
      <NavigationBar />
      <AxisTriad />
    </main>
  );
}

/* ---------- document tabs and status bar ---------- */

const docTabs = [
  { label: "내 홈", width: "w-[60px]" },
  { label: "부품1", width: "w-[63px]" },
  { label: "부품2", width: "w-[63px]" },
  { label: "부품3", width: "w-[77px]", active: true },
];

function DocumentTabs() {
  return (
    <div className="flex h-7 shrink-0 border-t border-b border-t-[#777] border-b-black bg-linear-to-b from-[#dedede] to-[#b0b0b0]">
      {[
        <svg key="c" viewBox="0 0 20 19" className="h-[19px] w-5" fill="#e9ebee" stroke="#4d5157" strokeWidth="1.300">
          <path d="M1 1h13v9H1zM3 5h13v9H3zM6 9h13v9H6z" />
          <path d="M1 2h13M3 6h13M6 10h13" strokeWidth="2.500" />
        </svg>,
        <svg key="t" viewBox="0 0 20 18" className="h-[18px] w-5" fill="#e9ebee" stroke="#4d5157" strokeWidth="1.300">
          <path d="M1 1h7v6H1zM11 1h7v6h-7zM1 10h7v6H1zM11 10h7v6h-7z" />
          <path d="M1 2h7M11 2h7M1 11h7M11 11h7" strokeWidth="2" />
        </svg>,
        <Caret key="u" className="mb-2 h-[6px] w-3 rotate-180 text-[#333]" />,
      ].map((icon, i) => (
        <button
          key={i}
          aria-label={["계단식", "바둑판식", "문서 목록"][i]}
          className={clsx("flex w-[25px] items-center justify-center border-r-2 border-[#444]", i === 2 ? "bg-[#d8dadf]" : "bg-[#c4c4c6]")}
        >
          {icon}
        </button>
      ))}
      {docTabs.map((t) => (
        <button key={t.label} className={clsx("relative h-[23px] text-left text-base leading-[21px] text-black", t.width)}>
          <svg viewBox="0 0 60 23" preserveAspectRatio="none" className="absolute inset-0 h-full w-full">
            <path
              d="M.5 0v15l6 6.500h48l5-6.500V0"
              fill={t.active ? "#fff" : "#cbcbcb"}
              stroke={t.active ? "#999" : "#555"}
              vectorEffect="non-scaling-stroke"
            />
          </svg>
          <span className="relative flex items-center gap-[6px] pl-[10px]">
            {t.label}
            {t.active && (
              <svg viewBox="0 0 10 10" className="mb-1 size-[10px]">
                <path d="M1 1l8 8M9 1L1 9" stroke="#777" strokeWidth="4" />
                <path d="M1 1l8 8M9 1L1 9" stroke="#fff" strokeWidth="1.500" />
              </svg>
            )}
          </span>
        </button>
      ))}
    </div>
  );
}

const Bulb = () => (
  <>
    <circle cx="16" cy="12" r="3.500" fill="#ffdf7a" stroke="#f09a1f" strokeWidth="1.500" />
    <path d="M14.500 16h3v4h-3z" fill="#8a8a8a" />
  </>
);

function StatusTools() {
  return (
    <div className="flex h-full items-center border-l border-[#c8c8c8] pl-px">
      <button aria-label="그리드에 스냅" className="mr-[3px] flex h-[27px] w-[29px] items-center justify-center border border-[#0a64bf] bg-[#b9d7f2]">
        <svg viewBox="0 0 21 20" className="h-5 w-[21px]">
          <path d="M1 1h15v15H1zM6 1v15M11 1v15M1 6h15M1 11h15" fill="#f7f8fa" stroke="#555" />
          <path d="M12 19v-5c0-5 7-5 7 0v5" fill="none" stroke="#b3262b" strokeWidth="3" />
          <path d="M10.500 18h3v2h-3zM17.500 18h3v2h-3z" fill="#eee" stroke="#666" strokeWidth=".5" />
        </svg>
      </button>
      <button aria-label="구속조건 표시" className="flex w-[31px] justify-start pl-[2px]">
        <svg viewBox="0 0 20 20" className="size-5">
          <path d="M1 1h18v10H1z" fill="#e6e9ed" stroke="#555b63" strokeWidth="1.500" />
          <path d="M6 6l3 3 5-6" fill="none" stroke="#cc2a2a" strokeWidth="1.500" />
          <Bulb />
        </svg>
      </button>
      <button aria-label="치수 표시" className="flex items-center gap-[7px]">
        <svg viewBox="0 0 20 20" className="size-5" stroke="#1f3c68" strokeWidth="1.500" fill="none">
          <path d="M1 4h6M4 1v6M8 7l4-7M13 4h6M1 11v9M19 11v9M1 14h18" />
          <path d="M5 12l-3 2 3 2M15 12l3 2-3 2" />
        </svg>
        <Caret className="h-1 w-[7px] text-[#333]" />
      </button>
      <button aria-label="그래픽 슬라이스" className="ml-[10px]">
        <svg viewBox="0 0 20 20" className="size-5">
          <path d="M1 11l5-4h6v8l-4 4H1z" fill="#e4e8ee" stroke="#444" />
          <path d="M1 11h8v8H1z" fill="#f5d31d" stroke="#8a6d08" />
          <path d="M11 7l8-6v12l-8 6z" fill="#a5c3e6" stroke="#35639e" />
        </svg>
      </button>
      <button aria-label="모든 자유도 표시" className="ml-[11px]">
        <svg viewBox="0 0 20 20" className="size-5">
          <path d="M6 0v12M0 6h12M4 2l2-2 2 2M4 10l2 2 2-2M2 4L0 6l2 2M10 4l2 2-2 2" fill="none" stroke="#dd2a2a" strokeWidth="1.300" />
          <Bulb />
        </svg>
      </button>
      <button aria-label="완화 모드" className="ml-[10px]">
        <svg viewBox="0 0 20 20" className="size-5">
          <path d="M2 5l14 13" stroke="#d43a3a" strokeWidth="1.500" />
          <path d="M0 3h4v4H0zM14 16h4v4h-4z" fill="#f4c5c5" stroke="#b82727" />
          <path d="M14 0v12M8 6h12M12 2l2-2 2 2M12 10l2 2 2-2M10 4L8 6l2 2M18 4l2 2-2 2" fill="none" stroke="#3c4554" strokeWidth="1.300" />
        </svg>
      </button>
    </div>
  );
}

function StatusBar() {
  return (
    <div className="flex h-[29px] items-center bg-linear-to-b from-[#fafafa] to-[#b2b2b2] text-base leading-5 whitespace-nowrap text-black">
      <p className="w-[449px] pl-px">도움말을 보려면 F1 키를 누르십시오.</p>
      <StatusTools />
      <div className="ml-auto flex h-full font-['Noto_Sans_CJK_KR',sans-serif] text-[15px]">
        <span className="flex w-[164px] items-center border-l border-[#ccc] pl-[5px]">33.121 mm, 151.11 deg</span>
        <span className="flex w-[38px] items-center border-l border-[#ccc] pl-[9px]">1</span>
        <span className="flex w-[38px] items-center border-l border-[#ccc] pl-[9px]">3</span>
      </div>
    </div>
  );
}

/* ---------- windows taskbar ---------- */

const taskApps: { label: string; icon: ReactNode; state?: "open" | "active" }[] = [
  {
    label: "Edge",
    icon: (
      <svg viewBox="0 0 26 26" className="size-[26px]">
        <path
          d="M1 12C2 4 7 0 13 0c7 0 12 5 12 12v3H9c0 4 3 6 8 6 3 0 5-1 7-2v5c-2 1-5 2-8 2C9 26 5 22 5 16c0-4 2-7 6-9-2 2-2 3-2 4h9c0-4-2-6-6-6-5 0-9 3-11 7z"
          fill="#0a7cdb"
        />
      </svg>
    ),
  },
  {
    label: "파일 탐색기",
    icon: (
      <svg viewBox="0 0 28 24" className="h-6 w-7">
        <path d="M0 1h10l2 3h16v19H0z" fill="#f4c94f" />
        <path d="M0 6h28v17H0z" fill="#fde497" />
        <path d="M5 12h18v12h-5v-6h-8v6H5z" fill="#3fb2ea" />
      </svg>
    ),
  },
  {
    label: "메일",
    icon: (
      <svg viewBox="0 0 30 24" className="h-6 w-[30px]">
        <path d="M0 8L15 0l15 8v16H0z" fill="#fff" />
        <path d="M2 8h24l-11 5 8 6-8-3z" fill="#0a0a0a" />
      </svg>
    ),
  },
  {
    label: "스토어",
    icon: (
      <svg viewBox="0 0 28 28" className="size-7">
        <path d="M9 8V5c0-5 10-5 10 0v3" fill="none" stroke="#ddd" strokeWidth="1.500" />
        <path d="M0 7h28v20H0z" fill="#fff" />
        <path d="M8 11h6v6H8z" fill="#f25022" />
        <path d="M15 11h6v6h-6z" fill="#7fba00" />
        <path d="M8 18h6v6H8z" fill="#00a4ef" />
        <path d="M15 18h6v6h-6z" fill="#ffb900" />
      </svg>
    ),
  },
  {
    label: "Chrome",
    state: "open",
    icon: (
      <svg viewBox="0 0 28 28" className="size-7">
        <circle cx="14" cy="14" r="13.500" fill="#fbcb2b" />
        <path d="M14 14L2.300 7.200A13.500 13.500 0 0 1 25.700 7.500H14z" fill="#dd4b3e" />
        <path d="M2.300 7.200A13.500 13.500 0 0 0 13 27.500L19.600 17.200 14 14 8.400 17z" fill="#1f9d58" />
        <circle cx="14" cy="14" r="6.500" fill="#fff" />
        <circle cx="14" cy="14" r="5" fill="#4a87ee" />
      </svg>
    ),
  },
  {
    label: "Inventor",
    state: "active",
    icon: (
      <svg viewBox="0 0 30 30" className="size-[30px]">
        <path d="M0 0h30v30H0z" fill="#ece7e3" />
        <path d="M0 14l14 16H0z" fill="#d8cfc9" />
        <g transform="translate(5 2) scale(.8)">
          <InventorMark />
        </g>
        <text x="17" y="29" className="font-['Liberation_Sans',sans-serif] text-[6px]" fill="#444">PRO</text>
      </svg>
    ),
  },
];

function Taskbar() {
  return (
    <footer className="flex h-[50px] shrink-0 items-stretch bg-[#0a0a0a] text-white">
      <button aria-label="시작" className="flex w-[60px] items-center justify-center">
        <svg viewBox="0 0 20 20" className="size-5">
          <path d="M0 3l8-1v7H0zM9 2l11-2v9H9zM0 10h8v8l-8-1zM9 10h11v10L9 18z" fill="#fff" />
        </svg>
      </button>
      <button aria-label="검색" className="flex w-[60px] items-center justify-center">
        <svg viewBox="0 0 20 20" className="size-5" fill="none" stroke="#fff" strokeWidth="1.500">
          <circle cx="13" cy="7" r="6" />
          <path d="M9 11l-8 8" />
        </svg>
      </button>
      <button aria-label="작업 보기" className="mr-[3px] flex w-[60px] items-center justify-center">
        <svg viewBox="0 0 20 20" className="size-5" fill="none" stroke="#fff">
          <path d="M.5 0v4.500h12V0M1.500 7.500h10v6h-10zM.5 20v-3.500h12V20M17.500 0v5M17.500 11v9" />
          <path d="M16 6h3v4h-3z" fill="#fff" stroke="none" />
        </svg>
      </button>
      {taskApps.map((a) => (
        <button
          key={a.label}
          aria-label={a.label}
          className={clsx(
            "flex w-[62px] items-center justify-center border-b-3 pt-[3px]",
            a.state ? "border-[#76b9ed]" : "border-transparent",
            a.state === "active" && "bg-[#3c3c3c]"
          )}
        >
          {a.icon}
        </button>
      ))}

      <div className="ml-auto flex items-center">
        <button aria-label="피플" className="mr-7 w-[18px]">
          <svg viewBox="0 0 18 19" className="h-[19px] w-[18px]" fill="none" stroke="#fff" strokeWidth="1.500">
            <circle cx="5.500" cy="10" r="3" />
            <path d="M1 19c0-7 9-7 9 0" />
            <circle cx="12.500" cy="4" r="3" />
            <path d="M9 9c3-3 8-1 8 4" />
          </svg>
        </button>
        <button aria-label="숨겨진 아이콘 표시" className="mr-3">
          <svg viewBox="0 0 16 9" className="h-[9px] w-4" fill="none" stroke="#fff" strokeWidth="1.300">
            <path d="M0 8.500l8-8 8 8" />
          </svg>
        </button>
        <button aria-label="배터리" className="mr-3">
          <svg viewBox="0 0 20 14" className="h-[14px] w-5" fill="none" stroke="#fff">
            <path d="M6 3.500h11.500v9H5.500V9M18 6h1.500v4H18" />
            <path d="M8 5h7v6H7z" fill="#fff" />
            <path d="M1 0v3M4 0v3M0 3.500h5v3H0zM2.500 6v4" />
          </svg>
        </button>
        <button aria-label="네트워크" className="mr-3">
          <svg viewBox="0 0 16 16" className="size-4" fill="none" stroke="#ccc" strokeWidth="1.300">
            <path d="M1 15C1 7 7 1 15 1M5 15c0-6 4-10 10-10M9 15c0-4 2-6 6-6" />
            <circle cx="14" cy="14" r="1.500" fill="#fff" stroke="none" />
          </svg>
        </button>
        <button aria-label="볼륨" className="mr-[10px]">
          <svg viewBox="0 0 20 16" className="h-4 w-5" fill="none" stroke="#fff">
            <path d="M.5 5.500h3l4-4v13l-4-4h-3z" />
            <path d="M10 6c1 1 1 3 0 4M13 4c2 2 2 6 0 8" />
            <path d="M16 2c3 3 3 9 0 12" stroke="#777" />
          </svg>
        </button>
        <span className="w-[18px] text-center text-2xl leading-6">A</span>
        <time className="mr-[10px] ml-[10px] w-[81px] text-center text-[15px] leading-6 whitespace-nowrap">
          오후 3:46
          <br />
          2019-03-27
        </time>
        <button aria-label="알림 4개" className="relative mr-[25px] ml-[11px] w-5">
          <svg viewBox="0 0 20 20" className="size-5">
            <path d="M0 0h20v16h-8l-4 4v-4H0z" fill="#fff" />
            <path d="M4 4h12M4 8h12M4 12h12" stroke="#0a0a0a" strokeWidth="1.300" />
          </svg>
          <span className="absolute top-2 left-[9px] flex size-5 items-center justify-center rounded-full border border-[#888] bg-[#2b2b2b] text-[13px] leading-4 font-bold">
            4
          </span>
        </button>
        <span className="mr-[5px] h-[50px] w-px bg-[#666]" />
      </div>
    </footer>
  );
}

export default function App() {
  return (
    <div className="relative flex h-screen flex-col overflow-hidden bg-[#f0f0f0] font-['Noto_Sans','Noto_Sans_CJK_KR',sans-serif]">
      <header className="relative">
        <TitleBar />
        <RibbonTabs />
        <button
          aria-label="응용프로그램 메뉴"
          className="absolute top-0 left-0 flex h-10 w-10 flex-col border-r-2 border-b-2 border-black bg-linear-to-b from-[#a8a8a8] to-[#8a8a8a] pl-[6px]"
        >
          <span className="flex items-center gap-[5px]">
            <svg viewBox="3 0 19 26" className="mt-[2px] h-[26px] w-[18px]">
              <InventorMark />
            </svg>
            <Caret className="mt-3 h-1 w-[7px] text-[#222]" />
          </span>
          <span className="pl-[5px] font-['Liberation_Sans',sans-serif] text-[8px] leading-[10px] font-bold text-black">PRO</span>
        </button>
        <Ribbon />
      </header>
      <div className="flex min-h-0 flex-1">
        <ModelBrowser />
        <div className="flex min-w-0 flex-1 flex-col border-l border-[#777]">
          <SketchCanvas />
          <div className="h-px shrink-0 bg-white" />
          <DocumentTabs />
        </div>
      </div>
      <StatusBar />
      <Taskbar />
      <OptionsTooltip />
    </div>
  );
}
